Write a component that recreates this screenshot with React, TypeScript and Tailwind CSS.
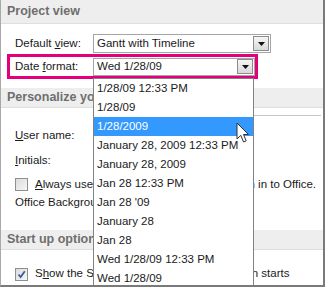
import React from 'react';

const dateFormats = [
  '1/28/09 12:33 PM',
  '1/28/09',
  '1/28/2009',
  'January 28, 2009 12:33 PM',
  'January 28, 2009',
  'Jan 28 12:33 PM',
  "Jan 28 '09",
  'January 28',
  'Jan 28',
  'Wed 1/28/09 12:33 PM',
  'Wed 1/28/09',
];

const ArrowButton = () => (
  <div className="w-[16px] h-[15px] mr-[1px] border border-[#8c8c8c] bg-gradient-to-b from-[#f6f6f6] to-[#d9d9d9] flex items-center justify-center">
    <svg width="7" height="4" viewBox="0 0 7 4">
      <path d="M0 0H7L3.5 4Z" fill="#111" />
    </svg>
  </div>
);

const Combo = ({ value, width, height }: { value: string; width: string; height: string }) => (
  <div className={`${width} ${height} border border-[#a5a5a5] bg-white flex items-center justify-between pl-[3px]`}>
    <span>{value}</span>
    <ArrowButton />
  </div>
);

const SectionHeader = ({ title, className }: { title: string; className: string }) => (
  <div className={`${className} bg-[#eeeeee] border-b border-[#dedede] pl-[6px] flex items-center font-bold text-[12.5px] text-[#6e6e6e] whitespace-nowrap`}>
    {title}
  </div>
);

const Checkbox = ({ checked }: { checked?: boolean }) => (
  <div className="w-[13px] h-[13px] border border-[#8e8f8f] bg-gradient-to-br from-[#dcdcdc] to-[#f7f7f7] flex items-center justify-center">
    {checked && (
      <svg width="9" height="9" viewBox="0 0 9 9">
        <path d="M1.5 4.5L3.6 7L7.8 1.2" stroke="#3d5a9e" strokeWidth="1.8" fill="none" />
      </svg>
    )}
  </div>
);

export default function App() {
  return (
    <div className="w-[325px] h-[287px] relative overflow-hidden bg-white border-l border-l-[#a9a9a9] border-r-2 border-b-2 border-r-[#7a7a7a] border-b-[#7a7a7a] font-['Liberation_Sans',Arial,sans-serif] text-[11.5px] text-[#1a1a1a]">
      {/* Project view */}
      <SectionHeader title="Project view" className="h-[24px]" />

      <div className="mt-[10px] h-[19px] flex items-center">
        <span className="pl-[14px] w-[92px]">
          Default <span className="underline">v</span>iew:
        </span>
        <Combo value="Gantt with Timeline" width="w-[178px]" height="h-[19px]" />
      </div>

      {/* highlighted row */}
      <div className="mt-[1px] ml-[6px] w-[251px] h-[25px] border-[3px] border-[#e4007c] flex items-center">
        <span className="pl-[5px] w-[83px]">
          Date <span className="underline">f</span>ormat:
        </span>
        <Combo value="Wed 1/28/09" width="w-[162px]" height="h-[18px]" />
      </div>

      {/* Personalize */}
      <SectionHeader title="Personalize your copy of Microsoft Office" className="mt-[9px] h-[20px]" />

      <div className="mt-[7px] h-[31px] flex items-end">
        <span className="pl-[14px] w-[92px] h-[20px] flex items-center">
          <span>
            <span className="underline">U</span>ser name:
          </span>
        </span>
        <div className="self-start w-[228px] h-[26px] border-t border-[#c6c6c6]" />
      </div>
      <div className="mt-[5px] h-[20px] flex items-center">
        <span className="pl-[14px] w-[92px]">
          <span className="underline">I</span>nitials:
        </span>
        <div className="w-[60px] h-[19px] border border-[#ababab]" />
      </div>
      <div className="mt-[5px] h-[17px] flex items-center pl-[14px] gap-[7px] whitespace-nowrap">
        <Checkbox />
        <span>
          <span className="underline">A</span>lways use these values regardless of sign in to Office.
        </span>
      </div>
      <div className="h-[20px] flex items-center pl-[14px] whitespace-nowrap">
        Office Background:
      </div>

      {/* Start up options */}
      <SectionHeader title="Start up options" className="mt-[17px] h-[20px]" />

      <div className="mt-[14px] h-[20px] flex items-center pl-[14px] gap-[7px] whitespace-nowrap">
        <Checkbox checked />
        <span>
          S<span className="underline">h</span>ow the Start screen when this application starts
        </span>
      </div>

      {/* open dropdown list */}
      <div className="absolute left-[92px] top-[78px] w-[161px] border border-[#828282] bg-white">
        {dateFormats.map((f, i) => (
          <div
            key={f}
            className={`h-[19px] pl-[3px] flex items-center whitespace-nowrap ${
              i === 2 ? 'bg-[#3399ff] text-white' : ''
            }`}
          >
            {f}
          </div>
        ))}
      </div>

      {/* mouse pointer */}
      <svg className="absolute left-[235px] top-[122px]" width="14" height="22" viewBox="0 0 14 22">
        <path
          d="M1 1V17L4.8 13.4L7.6 20L10.2 18.9L7.5 12.5H12.5Z"
          fill="#fff"
          stroke="#333"
          strokeWidth="1"
          strokeLinejoin="round"
        />
      </svg>
    </div>
  );
}
